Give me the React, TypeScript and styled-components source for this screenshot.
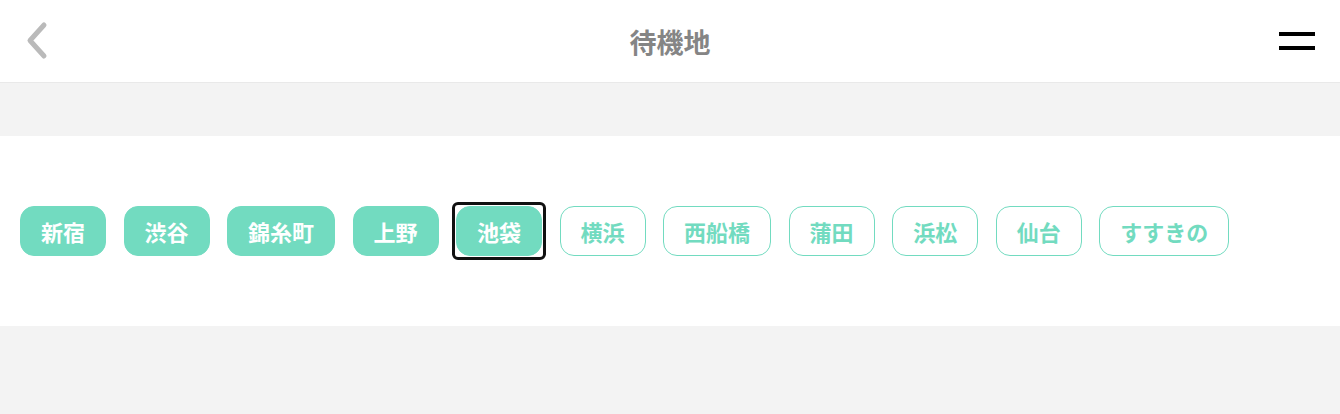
import React from "react";
import styled, { createGlobalStyle } from "styled-components";

const Global = createGlobalStyle`
  html, body { margin: 0; padding: 0; background: #f3f3f3; }
  body { font-family: "Noto Sans CJK JP", "Noto Sans", sans-serif; }
`;

const Page = styled.div`
  width: 1340px;
  height: 414px;
  background: #f3f3f3;
  display: flex;
  flex-direction: column;
`;

const Header = styled.header`
  height: 83px;
  background: #fff;
  border-bottom: 1px solid #e9e9e9;
  display: grid;
  grid-template-columns: 120px 1fr 120px;
  align-items: center;
  box-sizing: border-box;
`;

const BackButton = styled.button`
  justify-self: start;
  margin-left: 22px;
  border: none;
  background: none;
  padding: 0;
  width: 30px;
  height: 40px;
  display: flex;
  align-items: center;
  justify-content: center;
`;

const Title = styled.h1`
  margin: 0;
  text-align: center;
  font-size: 27px;
  font-weight: 700;
  color: #858585;
  letter-spacing: 0;
`;

const MenuButton = styled.button`
  justify-self: end;
  margin-right: 25px;
  border: none;
  background: none;
  padding: 0;
  width: 36px;
  height: 18px;
  display: flex;
  flex-direction: column;
  justify-content: space-between;
`;

const MenuLine = styled.span`
  display: block;
  width: 36px;
  height: 4px;
  background: #000;
`;

const Spacer = styled.div`
  height: 53px;
`;

const Section = styled.section`
  background: #fff;
  height: 190px;
  display: flex;
  align-items: center;
  padding: 0 20px;
  box-sizing: border-box;
`;

const ChipRow = styled.div`
  display: flex;
  gap: 17.5px;
`;

const Chip = styled.button<{ $active: boolean; $focused?: boolean }>`
  position: relative;
  height: 50px;
  padding: 0 20px;
  border-radius: 14px;
  border: 1px solid #72dbc0;
  background: ${(p) => (p.$active ? "#72dbc0" : "#fff")};
  color: ${(p) => (p.$active ? "#fff" : "#72dbc0")};
  font-family: "Noto Sans CJK JP", "Noto Sans", sans-serif;
  font-size: 22px;
  font-weight: 700;
  white-space: nowrap;
  display: flex;
  align-items: center;
  box-sizing: border-box;
  cursor: pointer;
  &::after {
    content: "";
    display: ${(p) => (p.$focused ? "block" : "none")};
    position: absolute;
    left: -5px;
    top: -5px;
    right: -5px;
    bottom: -5px;
    border: 3px solid #111;
    border-radius: 6px;
    pointer-events: none;
  }
`;

const chips = [
  { label: "新宿", active: true },
  { label: "渋谷", active: true },
  { label: "錦糸町", active: true },
  { label: "上野", active: true },
  { label: "池袋", active: true, focused: true },
  { label: "横浜", active: false },
  { label: "西船橋", active: false },
  { label: "蒲田", active: false },
  { label: "浜松", active: false },
  { label: "仙台", active: false },
  { label: "すすきの", active: false },
];

export default function App() {
  return (
    <Page>
      <Global />
      <Header>
        <BackButton aria-label="戻る">
          <svg width="26" height="40" viewBox="0 0 26 40">
            <path
              d="M20 4 L6 19.5 L20 35"
              fill="none"
              stroke="#bababa"
              strokeWidth="5"
              strokeLinecap="round"
              strokeLinejoin="round"
            />
          </svg>
        </BackButton>
        <Title>待機地</Title>
        <MenuButton aria-label="メニュー">
          <MenuLine />
          <MenuLine />
        </MenuButton>
      </Header>
      <Spacer />
      <Section>
        <ChipRow>
          {chips.map((c) => (
            <Chip key={c.label} $active={c.active} $focused={c.focused}>
              {c.label}
            </Chip>
          ))}
        </ChipRow>
      </Section>
    </Page>
  );
}
